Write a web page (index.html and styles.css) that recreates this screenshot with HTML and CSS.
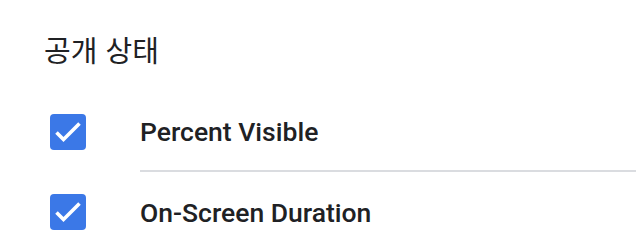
FILE: index.html
```html
<!DOCTYPE html>
<html lang="ko">
<head>
    <meta charset="UTF-8">
    <meta name="viewport" content="width=device-width, initial-scale=1.0">
    <title>공개 상태</title>
    <link rel="stylesheet" href="styles.css">
</head>
<body>
    <h2 class="title">공개 상태</h2>
    <div class="options">
        <label class="option">
            <span class="checkbox">
                <svg viewBox="0 0 36 36" width="36" height="36">
                    <path d="M6.5 18.5l7 7 16-16" fill="none" stroke="#fff" stroke-width="3.6"/>
                </svg>
            </span>
            <span class="option-label">Percent Visible</span>
        </label>
        <label class="option">
            <span class="checkbox">
                <svg viewBox="0 0 36 36" width="36" height="36">
                    <path d="M6.5 18.5l7 7 16-16" fill="none" stroke="#fff" stroke-width="3.6"/>
                </svg>
            </span>
            <span class="option-label">On-Screen Duration</span>
        </label>
    </div>
</body>
</html>
```
FILE: styles.css
```css
body {
    margin: 0;
    background-color: #fff;
    color: #202124;
    font-family: Roboto, "Noto Sans CJK KR", sans-serif;
}
.title {
    margin: 0;
    padding: 32px 0 0 44px;
    height: 92px;
    box-sizing: border-box;
    font-family: "Noto Sans CJK KR", sans-serif;
    font-size: 29px;
    font-weight: 400;
    line-height: 34px;
}
.options {
    display: flex;
    flex-direction: column;
}
.option {
    display: flex;
    align-items: center;
    height: 80px;
}
.checkbox {
    flex: none;
    width: 36px;
    height: 36px;
    margin: 0 54px 0 50px;
    border-radius: 4px;
    background-color: #3b78e7;
}
.checkbox svg {
    display: block;
}
.option-label {
    flex: 1;
    align-self: stretch;
    display: flex;
    align-items: center;
    font-size: 26.5px;
    font-weight: 500;
    color: #202124;
}
.option:first-child .option-label {
    border-bottom: 2px solid #dadce0;
}
```
